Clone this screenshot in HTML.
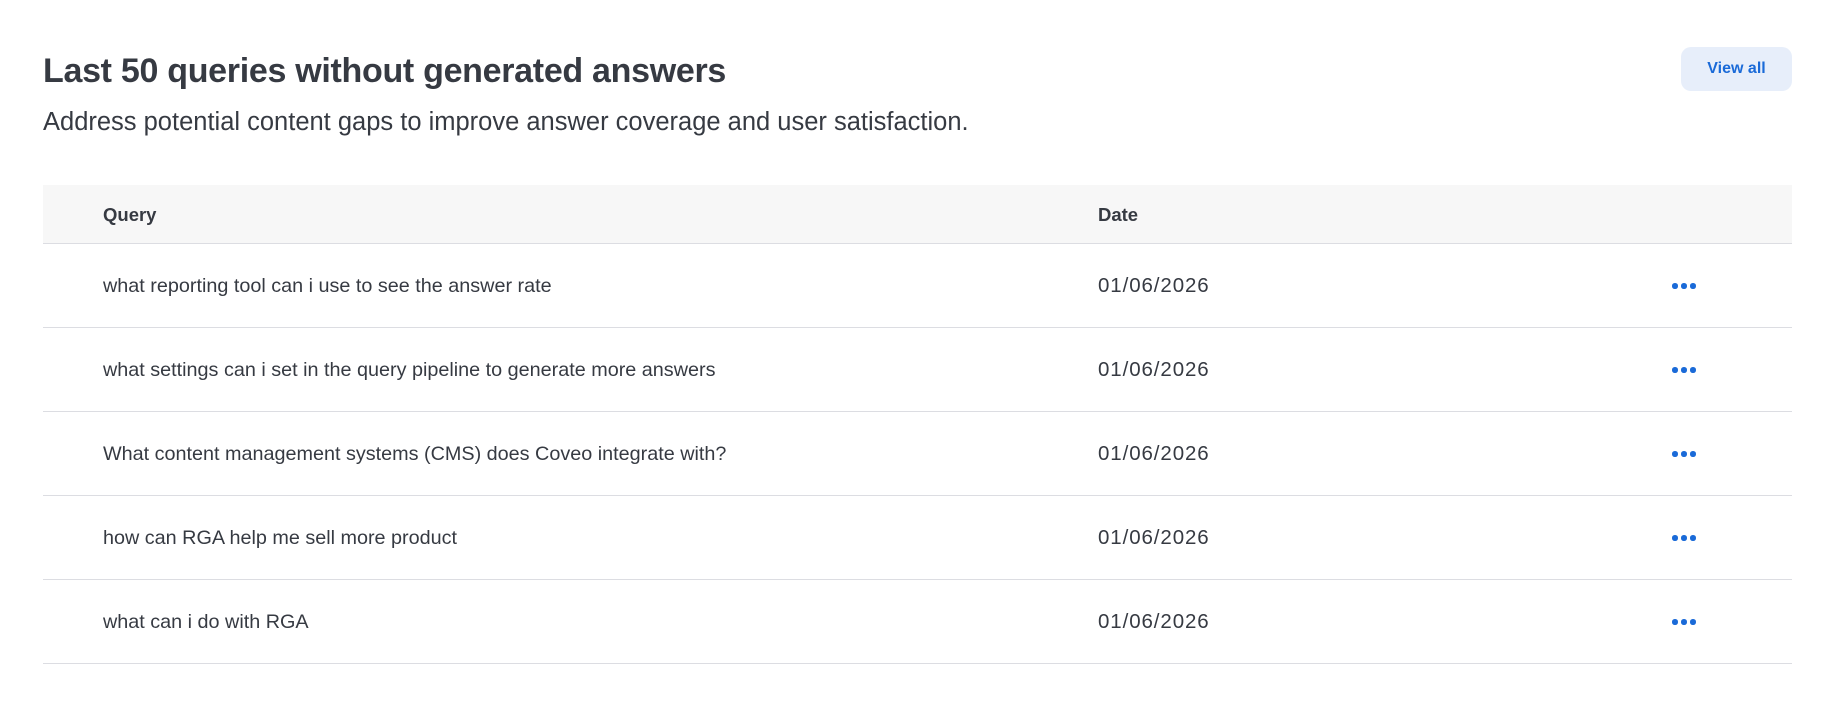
<!DOCTYPE html>
<html><head><style>
body{margin:0;width:1838px;height:706px;background:#fff;font-family:"Liberation Sans",sans-serif;color:#333740;position:relative;overflow:hidden}
h1{position:absolute;left:43px;top:52px;margin:0;font-size:34px;font-weight:bold;letter-spacing:-0.3px;color:#363a42}
.sub{position:absolute;left:43px;top:108px;font-size:25.5px;color:#363a42}
.btn{position:absolute;left:1681px;top:47px;width:111px;height:44px;border-radius:10px;background:#e7eefa;color:#1a6ad8;font-weight:bold;font-size:16px;line-height:44px;text-align:center}
.hdr{position:absolute;left:43px;top:185px;width:1749px;height:58px;background:#f7f7f7;border-bottom:1px solid #dcdde2}
.hdr span{position:absolute;top:19px;font-size:18.5px;font-weight:bold;color:#363a42}
.row{position:absolute;left:43px;width:1749px;height:83px;border-bottom:1px solid #dcdde2}
.row span{position:absolute;top:31px;font-size:19.8px;color:#363a42}
.row span.d{font-size:20.5px;letter-spacing:0.9px;top:30px}
.q{left:60px}.d{left:1055px}
.dots{position:absolute;left:1629px;top:39px;display:flex;gap:3.5px}
.dots i{width:5.5px;height:5.5px;border-radius:50%;background:#1a6ad8;display:block}
</style></head><body>
<h1>Last 50 queries without generated answers</h1>
<div class="sub">Address potential content gaps to improve answer coverage and user satisfaction.</div>
<div class="btn">View all</div>
<div class="hdr"><span class="q">Query</span><span class="d">Date</span></div>
<div class="row" style="top:244px"><span class="q">what reporting tool can i use to see the answer rate</span><span class="d">01/06/2026</span><div class="dots"><i></i><i></i><i></i></div></div>
<div class="row" style="top:328px"><span class="q">what settings can i set in the query pipeline to generate more answers</span><span class="d">01/06/2026</span><div class="dots"><i></i><i></i><i></i></div></div>
<div class="row" style="top:412px"><span class="q">What content management systems (CMS) does Coveo integrate with?</span><span class="d">01/06/2026</span><div class="dots"><i></i><i></i><i></i></div></div>
<div class="row" style="top:496px"><span class="q">how can RGA help me sell more product</span><span class="d">01/06/2026</span><div class="dots"><i></i><i></i><i></i></div></div>
<div class="row" style="top:580px"><span class="q">what can i do with RGA</span><span class="d">01/06/2026</span><div class="dots"><i></i><i></i><i></i></div></div>
</body></html>
